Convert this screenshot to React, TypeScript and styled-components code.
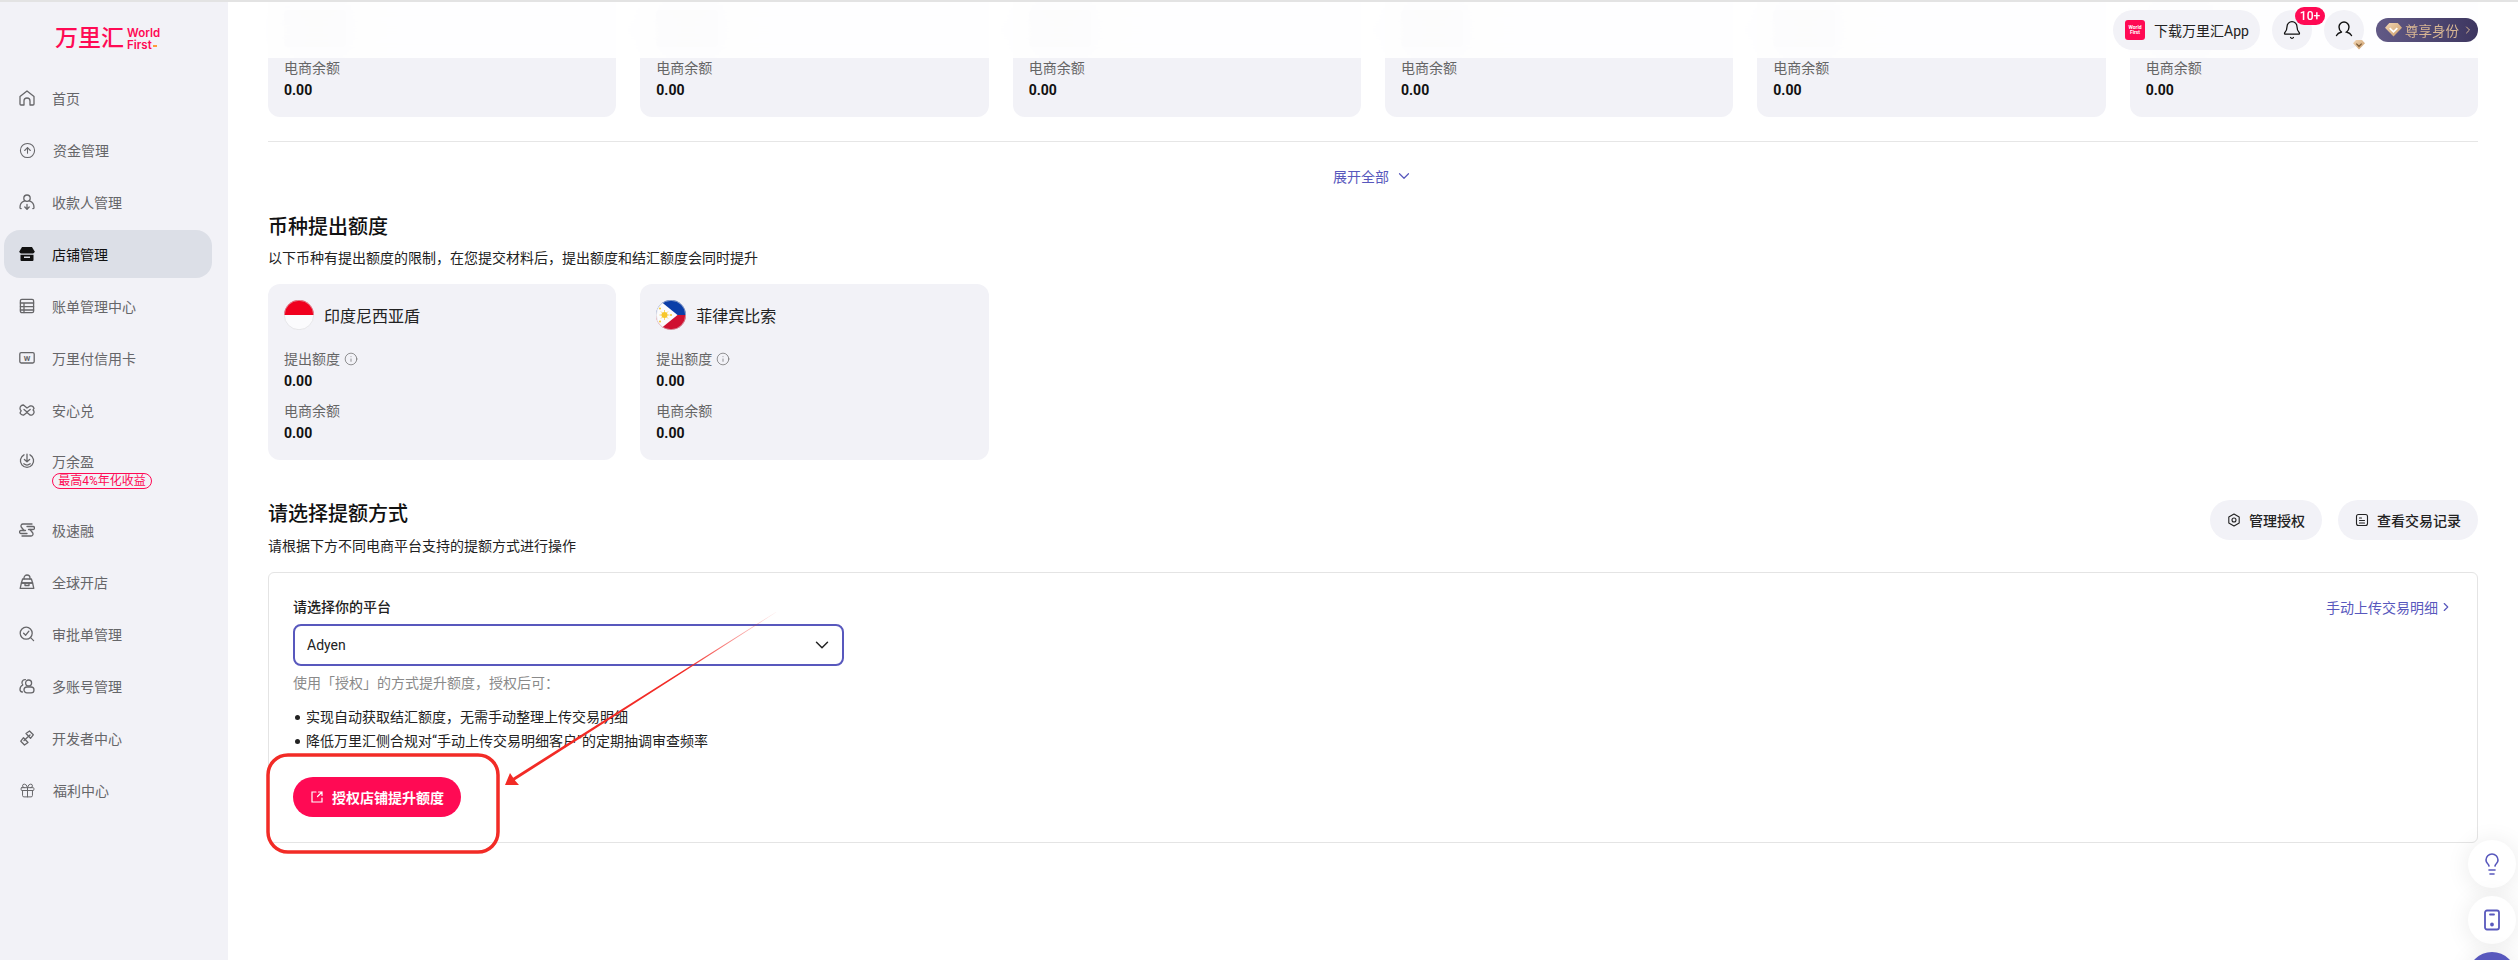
import React from "react";
import styled, { createGlobalStyle } from "styled-components";
import { Bell, ChevronDown, ChevronRight, CircleArrowUp, Gift, Info, Lightbulb } from "lucide-react";

const FONT = `Roboto, "Noto Sans CJK SC", "Noto Sans", sans-serif`;
const RED = "#ff0a54";
const PURPLE = "#5858bd";

const Global = createGlobalStyle`
  html, body { margin: 0; padding: 0; width: 2518px; height: 960px; overflow: hidden; background: #fff; }
  body { font-family: ${FONT}; color: #1a1a1a; }
  * { box-sizing: border-box; }
`;

const Page = styled.div`
  position: relative;
  width: 2518px;
  height: 960px;
  overflow: hidden;
  display: flex;
  flex-direction: column;
`;
const TopStrip = styled.div`
  height: 2px;
  flex: none;
  background: #e3e3e3;
`;
const Body = styled.div`
  flex: 1;
  display: flex;
  min-height: 0;
`;

/* ---------- sidebar ---------- */
const Sidebar = styled.aside`
  width: 228px;
  flex: none;
  background: #f2f2f7;
  display: flex;
  flex-direction: column;
  align-items: flex-start;
`;
const Logo = styled.div`
  height: 44px;
  margin: 15px 0 0 55px;
  display: flex;
  align-items: center;
  gap: 3px;
  color: ${RED};
`;
const LogoCn = styled.span`
  font-size: 23px;
  line-height: 24px;
  font-weight: 500;
  white-space: nowrap;
`;
const LogoEn = styled.span`
  position: relative;
  display: flex;
  flex-direction: column;
  align-items: center;
  font-family: Inter, sans-serif;
  font-size: 11.5px;
  line-height: 12px;
  font-weight: 600;
`;
const LogoSpark = styled.i`
  position: absolute;
  right: 3px;
  bottom: 4px;
  width: 4px;
  height: 2px;
  background: #ff9a3c;
`;
const Menu = styled.nav`
  margin-top: 11px;
  width: 100%;
  display: flex;
  flex-direction: column;
`;
const MenuItem = styled.div<{ $active?: boolean; $tall?: boolean }>`
  width: 208px;
  height: ${(p) => (p.$tall ? "64px" : "48px")};
  margin: 2px 0 2px 4px;
  padding-left: 15px;
  border-radius: 16px;
  display: flex;
  align-items: ${(p) => (p.$tall ? "flex-start" : "center")};
  gap: 17px;
  font-size: 14px;
  color: ${(p) => (p.$active ? "#111" : "#666669")};
  background: ${(p) => (p.$active ? "#dcdfe7" : "transparent")};
  svg { flex: none; }
`;
const TallText = styled.div`
  display: flex;
  flex-direction: column;
  align-items: flex-start;
  padding-top: 13px;
  line-height: 22px;
`;
const TallIcon = styled.div`
  padding-top: 15px;
  display: flex;
`;
const PromoTag = styled.span`
  height: 16px;
  width: 100px;
  border: 1px solid ${RED};
  border-radius: 8px;
  color: ${RED};
  font-size: 12px;
  line-height: 14px;
  text-align: center;
  white-space: nowrap;
`;

/* ---------- main ---------- */
const Main = styled.main`
  position: relative;
  flex: 1;
  min-width: 0;
  overflow: hidden;
`;
const Header = styled.header`
  position: absolute;
  z-index: 2;
  top: 0;
  left: 0;
  right: 0;
  height: 56px;
  padding: 8px 40px 0 0;
  display: flex;
  justify-content: flex-end;
  align-items: flex-start;
  background: rgba(255, 255, 255, 0.9);
  backdrop-filter: blur(26px);
`;
const AppPill = styled.div`
  width: 147px;
  height: 40px;
  border-radius: 20px;
  background: #f2f2f7;
  display: flex;
  align-items: center;
  gap: 9px;
  padding-left: 12px;
  font-size: 14px;
  color: #222;
  white-space: nowrap;
`;
const AppIcon = styled.span`
  width: 20px;
  height: 20px;
  border-radius: 3px;
  background: ${RED};
  color: #fff;
  display: flex;
  flex-direction: column;
  align-items: center;
  justify-content: center;
  font-size: 5px;
  line-height: 5px;
  font-weight: 700;
`;
const RoundBtn = styled.div`
  position: relative;
  width: 40px;
  height: 40px;
  margin-left: 12px;
  border-radius: 50%;
  background: #f2f2f7;
  display: flex;
  align-items: center;
  justify-content: center;
  color: #111;
`;
const CountBadge = styled.span`
  position: absolute;
  top: -3px;
  left: 23px;
  width: 30px;
  height: 18px;
  border-radius: 9px;
  background: ${RED};
  color: #fff;
  font-size: 12px;
  line-height: 18px;
  text-align: center;
  font-weight: 500;
`;
const GemBadge = styled.span`
  position: absolute;
  right: -1px;
  bottom: 0;
  display: flex;
`;
const VipPill = styled.div`
  width: 102px;
  height: 24px;
  margin: 8px 0 0 12px;
  border-radius: 12px;
  background: linear-gradient(90deg, #625a86, #3d3660);
  display: flex;
  align-items: center;
  padding-left: 9px;
  gap: 3px;
  font-size: 13.5px;
  white-space: nowrap;
  color: #d8b693;
  svg { flex: none; }
`;

const Content = styled.div`
  margin-top: -61px;
  padding: 0 40px;
`;
const CardGrid = styled.div`
  display: grid;
  grid-template-columns: repeat(6, 1fr);
  gap: 24px;
`;
const Card = styled.div`
  height: 176px;
  padding: 16px;
  border-radius: 12px;
  background: #f2f2f7;
`;
const CardHead = styled.div`
  height: 30px;
  display: flex;
  align-items: center;
  gap: 10px;
  font-size: 16px;
  color: #222;
`;
const Fields = styled.div`
  margin-top: 18px;
  display: flex;
  flex-direction: column;
  gap: 8px;
`;
const Field = styled.div`
  display: flex;
  flex-direction: column;
`;
const FieldLabel = styled.div`
  height: 22px;
  display: flex;
  align-items: center;
  gap: 4px;
  font-size: 14px;
  line-height: 22px;
  color: #666;
`;
const FieldValue = styled.div`
  height: 22px;
  font-size: 14px;
  line-height: 22px;
  font-weight: 700;
  color: #111;
`;
/* what the frosted header smudges: the part of a card that has scrolled under it */
const ScrolledPart = styled.div`
  height: 37px;
  margin: 53px 0 10px;
  width: 62px;
  border-radius: 4px;
  background: #d2d2d8;
`;
const Divider = styled.div`
  margin-top: 24px;
  height: 1px;
  background: #e6e6e6;
`;
const Expand = styled.div`
  height: 68px;
  display: flex;
  align-items: center;
  justify-content: center;
  gap: 6px;
  font-size: 14px;
  color: ${PURPLE};
`;
const Title = styled.h2`
  margin: 0;
  font-size: 20px;
  line-height: 28px;
  font-weight: 500;
  color: #111;
`;
const Sub = styled.p`
  margin: 6px 0 0;
  font-size: 14px;
  line-height: 22px;
  color: #222;
`;
const SectionOne = styled.section`
  margin-top: 3px;
  ${CardGrid} { margin-top: 15px; }
`;
const SectionTwo = styled.section`
  margin-top: 40px;
  ${Sub} { margin-top: 7px; }
`;
const SectionHead = styled.div`
  display: flex;
  justify-content: space-between;
  align-items: flex-start;
`;
const Actions = styled.div`
  display: flex;
  gap: 16px;
`;
const ActionBtn = styled.div<{ $w: number }>`
  width: ${(p) => p.$w}px;
  height: 40px;
  border-radius: 20px;
  background: #f2f2f7;
  display: flex;
  align-items: center;
  justify-content: center;
  gap: 8px;
  font-size: 14px;
  font-weight: 500;
  color: #222;
`;
const Panel = styled.div`
  margin-top: 15px;
  height: 271px;
  border: 1px solid #e4e4e4;
  border-radius: 6px;
  padding: 23px 24px 0;
`;
const PanelTop = styled.div`
  display: flex;
  justify-content: space-between;
  height: 22px;
  align-items: center;
`;
const FormLabel = styled.div`
  font-size: 14px;
  font-weight: 500;
  color: #222;
  line-height: 22px;
`;
const UploadLink = styled.div`
  display: flex;
  align-items: center;
  gap: 1px;
  font-size: 14px;
  color: ${PURPLE};
`;
const Select = styled.div`
  margin-top: 6px;
  width: 551px;
  height: 42px;
  border: 2px solid ${PURPLE};
  border-radius: 8px;
  padding: 0 9px 0 12px;
  display: flex;
  align-items: center;
  justify-content: space-between;
  font-size: 14px;
  color: #222;
`;
const Hint = styled.div`
  margin-top: 6px;
  font-size: 14px;
  line-height: 22px;
  color: #8a8a8a;
`;
const Bullets = styled.ul`
  margin: 12px 0 0;
  padding: 0;
  list-style: none;
`;
const Bullet = styled.li`
  position: relative;
  padding-left: 13px;
  font-size: 14px;
  line-height: 22px;
  margin-bottom: 2px;
  color: #222;
  &::before {
    content: "";
    position: absolute;
    left: 2px;
    top: 9px;
    width: 5px;
    height: 5px;
    border-radius: 50%;
    background: #222;
  }
`;
const Primary = styled.div`
  margin-top: 25px;
  width: 168px;
  height: 40px;
  border-radius: 20px;
  background: ${RED};
  color: #fff;
  display: flex;
  align-items: center;
  justify-content: center;
  gap: 8px;
  font-size: 14px;
  font-weight: 700;
`;

/* ---------- overlays ---------- */
const FloatBtn = styled.div<{ $top: number; $fill?: boolean }>`
  position: absolute;
  z-index: 3;
  right: 2px;
  top: ${(p) => p.$top}px;
  width: 48px;
  height: 48px;
  border-radius: 50%;
  background: ${(p) => (p.$fill ? PURPLE : "#fff")};
  color: ${PURPLE};
  box-shadow: 0 2px 24px rgba(0, 0, 0, 0.09);
  display: flex;
  align-items: center;
  justify-content: center;
`;
const Annotation = styled.svg`
  position: absolute;
  z-index: 4;
  left: 0;
  top: 0;
  pointer-events: none;
`;

/* ---------- icons ---------- */
const Ico = ({ children }: { children: React.ReactNode }) => (
  <svg width="16" height="16" viewBox="0 0 16 16" fill="none" stroke="currentColor" strokeWidth="1.300" strokeLinecap="round" strokeLinejoin="round">
    {children}
  </svg>
);
const icons: Record<string, React.ReactNode> = {
  home: <Ico><path d="M1 6.600 8 1l7 5.600V14a1 1 0 0 1-1 1h-3v-4a3 3 0 0 0-6 0v4H2a1 1 0 0 1-1-1z" /></Ico>,
  fund: <CircleArrowUp size={17} strokeWidth={1.5} />,
  payee: <Ico><circle cx="8" cy="4.200" r="3.200" /><path d="M5.200 7.200C2.800 8 1 10.200 1 13.400c0 .8.5 1.200 1.200 1.200M10.800 7.200C13.200 8 15 10.200 15 13.400c0 .8-.5 1.200-1.200 1.200" /><path d="M8 10.400v5M5.800 13 8 15.200l2.200-2.200" /></Ico>,
  store: (
    <svg width="16" height="16" viewBox="0 0 16 16" fill="currentColor">
      <path d="M3 1h10l2.500 4.200a2 2 0 0 1-1.500 2.300H2a2 2 0 0 1-1.500-2.300z" />
      <path d="M1.500 8.800h13V14a1 1 0 0 1-1 1h-11a1 1 0 0 1-1-1zM5 10.600v1.300h6v-1.300z" fillRule="evenodd" />
    </svg>
  ),
  bill: <Ico><rect x="1.400" y="1.400" width="13.200" height="13.200" rx="1.400" /><path d="M1.400 5h13.200M1.400 8.600h13.200M1.400 12h13.200M5 5v9.600" /></Ico>,
  card: (
    <Ico>
      <rect x="0.800" y="2.600" width="14.400" height="10.400" rx="1.400" />
      <text x="8" y="10.600" textAnchor="middle" fontSize="7.500" fontWeight="700" fill="currentColor" stroke="none" fontFamily="Roboto, sans-serif">W</text>
    </Ico>
  ),
  exchange: <Ico><path d="M4.500 3C2.500 3 1 4.600 1 6.500c0 1 .5 1.800 1.200 2.300L1 11c.8 1.500 2.200 2.300 3.800 2L8 10.500l3 2.500c1.800.5 3.500-.5 4-2.400.2-1-.2-2-1-2.600l1-1.500c-.5-1.800-2.200-3-4-2.500L8 6 4.500 3z" /><path d="M5 7.500l3 2.500 3.200-2.500" /></Ico>,
  yield: <Ico><path d="M5 1.800a6.600 6.600 0 1 0 6 0" /><path d="M8 1.200v7.200M5.400 6.400 8 8.800l2.600-2.400M4.800 10.800c1.800 1.400 4.600 1.400 6.400 0" /></Ico>,
  fast: <Ico><path d="M13 2H4a2 2 0 0 0-1.800 3L5 8.500M3 14h9a2 2 0 0 0 1.800-3L11 7.500" /><path d="M8 4.500h6a1.500 1.500 0 0 1 0 3H9.500M8 11.500H2a1.500 1.500 0 0 1 0-3h4.500" /></Ico>,
  shop: <Ico><path d="M5 5V4a3 3 0 0 1 6 0v1" /><path d="M3.600 5h8.800l1.200 4H2.400z" /><path d="M1.200 14.400 2.400 9h11.200l1.200 5.400zM6 9v2.500h4V9" /></Ico>,
  audit: <Ico><circle cx="7.200" cy="7.200" r="6" /><path d="M4.600 7.200 6.700 9.200l3.200-4M11.600 11.600l3 3" /></Ico>,
  multi: <Ico><circle cx="9.600" cy="5" r="3" /><path d="M6.400 1.600a3.200 3.200 0 0 0-2.600 5.400C1.800 7.800 1 9.600 1 11.400c0 1.500 1 2.400 2.400 2.600" /><rect x="5" y="9" width="10" height="5.800" rx="2.900" /></Ico>,
  dev: <Ico><path d="M7 3.500 10.500 1l3.800 3.800-2.800 3.500zM9 12.500 5.500 15 1.800 11.200l2.700-3.500z" /><path d="M5 10.500 11 5" /></Ico>,
  gift: <Gift size={17} strokeWidth={1.4} />,
};

const MENU: [string, string][] = [
  ["home", "首页"], ["fund", "资金管理"], ["payee", "收款人管理"], ["store", "店铺管理"],
  ["bill", "账单管理中心"], ["card", "万里付信用卡"], ["exchange", "安心兑"], ["yield", "万余盈"],
  ["fast", "极速融"], ["shop", "全球开店"], ["audit", "审批单管理"], ["multi", "多账号管理"],
  ["dev", "开发者中心"], ["gift", "福利中心"],
];

const IdFlag = () => (
  <svg width="30" height="30" viewBox="0 0 30 30">
    <clipPath id="idc"><circle cx="15" cy="15" r="15" /></clipPath>
    <g clipPath="url(#idc)"><rect width="30" height="15" fill="#f0001e" /><rect y="15" width="30" height="15" fill="#fbfbfd" /></g>
    <circle cx="15" cy="15" r="14.700" fill="none" stroke="#d6d6da" strokeWidth=".6" />
  </svg>
);
const PhFlag = () => (
  <svg width="30" height="30" viewBox="0 0 30 30">
    <clipPath id="phc"><circle cx="15" cy="15" r="15" /></clipPath>
    <g clipPath="url(#phc)">
      <rect width="30" height="15" fill="#0b3ea8" />
      <rect y="15" width="30" height="15" fill="#cf1130" />
      <path d="M0 0 L3 0 L21.500 15 L3 30 L0 30 Z" fill="#fbfbfd" />
      <circle cx="8.500" cy="15" r="3" fill="#f7c72c" />
      <path d="M8.500 10v10M3.500 15h10M5 11.500l7 7M12 11.500l-7 7" stroke="#f7c72c" strokeWidth=".7" />
      <circle cx="4" cy="8.500" r="1" fill="#f7c72c" /><circle cx="4" cy="21.500" r="1" fill="#f7c72c" /><circle cx="15" cy="15" r="1" fill="#f7c72c" />
    </g>
    <circle cx="15" cy="15" r="14.700" fill="none" stroke="#d6d6da" strokeWidth=".6" />
  </svg>
);

const Gem = ({ size }: { size: number }) => (
  <svg width={size} height={size * 0.8} viewBox="0 0 20 16">
    <defs>
      <linearGradient id={`gem${size}`} x1="0" x2="1" y1="0" y2="1"><stop offset="0" stopColor="#f3d7b4" /><stop offset="1" stopColor="#c99a68" /></linearGradient>
    </defs>
    <path d="M5 0h10l5 5.500L10 16 0 5.500z" fill={`url(#gem${size})`} />
    <path d="M5.500 6l4.500 4.500L14.500 6" stroke={size > 12 ? "#fff" : "#7a5a36"} strokeWidth="2" fill="none" />
  </svg>
);

const Money = ({ label, info }: { label: string; info?: boolean }) => (
  <Field>
    <FieldLabel>{label}{info && <Info size={14} strokeWidth={1.2} />}</FieldLabel>
    <FieldValue>0.00</FieldValue>
  </Field>
);

const CurrencyCard = ({ flag, name }: { flag: React.ReactNode; name: string }) => (
  <Card>
    <CardHead>{flag}{name}</CardHead>
    <Fields>
      <Money label="提出额度" info />
      <Money label="电商余额" />
    </Fields>
  </Card>
);

export default function App() {
  return (
    <Page>
      <Global />
      <TopStrip />
      <Body>
        <Sidebar>
          <Logo>
            <LogoCn>万里汇</LogoCn>
            <LogoEn>World<br />First<LogoSpark /></LogoEn>
          </Logo>
          <Menu>
            {MENU.map(([k, label]) =>
              k === "yield" ? (
                <MenuItem key={k} $tall>
                  <TallIcon>{icons[k]}</TallIcon>
                  <TallText>{label}<PromoTag>最高4%年化收益</PromoTag></TallText>
                </MenuItem>
              ) : (
                <MenuItem key={k} $active={k === "store"}>{icons[k]}{label}</MenuItem>
              )
            )}
          </Menu>
        </Sidebar>
        <Main>
          <Header>
            <AppPill><AppIcon><span>World</span><span>First</span></AppIcon>下载万里汇App</AppPill>
            <RoundBtn><Bell size={20} strokeWidth={1.5} /><CountBadge>10+</CountBadge></RoundBtn>
            <RoundBtn>
              <svg width="20" height="20" viewBox="0 0 20 20" fill="none" stroke="currentColor" strokeWidth="1.400" strokeLinecap="round">
                <path d="M7.500 12C5.800 10.800 5 9.200 5 7a5 5 0 0 1 10 0c0 2.200-.8 3.800-2.500 5 2 .5 4 1.500 5 3.500M7.500 12c-2 .5-4 1.500-5 3.500" />
              </svg>
              <GemBadge><Gem size={12} /></GemBadge>
            </RoundBtn>
            <VipPill><Gem size={17} />尊享身份<ChevronRight size={12} /></VipPill>
          </Header>
          <Content>
            <CardGrid>
              {[0, 1, 2, 3, 4, 5].map((i) => (
                <Card key={i}>
                  <ScrolledPart />
                  <Money label="电商余额" />
                </Card>
              ))}
            </CardGrid>
            <Divider />
            <Expand>展开全部<ChevronDown size={18} strokeWidth={1.6} /></Expand>
            <SectionOne>
              <Title>币种提出额度</Title>
              <Sub>以下币种有提出额度的限制，在您提交材料后，提出额度和结汇额度会同时提升</Sub>
              <CardGrid>
                <CurrencyCard flag={<IdFlag />} name="印度尼西亚盾" />
                <CurrencyCard flag={<PhFlag />} name="菲律宾比索" />
              </CardGrid>
            </SectionOne>
            <SectionTwo>
              <SectionHead>
                <div>
                  <Title>请选择提额方式</Title>
                  <Sub>请根据下方不同电商平台支持的提额方式进行操作</Sub>
                </div>
                <Actions>
                  <ActionBtn $w={112}>
                    <svg width="14" height="14" viewBox="0 0 14 14" fill="none" stroke="currentColor" strokeWidth="1.100"><path d="M7 1l5.200 3v6L7 13l-5.200-3V4z" strokeLinejoin="round" /><circle cx="7" cy="7" r="2" /></svg>
                    管理授权
                  </ActionBtn>
                  <ActionBtn $w={140}>
                    <svg width="14" height="14" viewBox="0 0 14 14" fill="none" stroke="currentColor" strokeWidth="1.100" strokeLinecap="round"><rect x="1.500" y="1.500" width="11" height="11" rx="2" /><path d="M4.500 5h2M4.500 7.500h5M4.500 10h5" /></svg>
                    查看交易记录
                  </ActionBtn>
                </Actions>
              </SectionHead>
              <Panel>
                <PanelTop>
                  <FormLabel>请选择你的平台</FormLabel>
                  <UploadLink>手动上传交易明细<ChevronRight size={14} /></UploadLink>
                </PanelTop>
                <Select>Adyen<ChevronDown size={22} strokeWidth={1.6} /></Select>
                <Hint>使用「授权」的方式提升额度，授权后可：</Hint>
                <Bullets>
                  <Bullet>实现自动获取结汇额度，无需手动整理上传交易明细</Bullet>
                  <Bullet>降低万里汇侧合规对“手动上传交易明细客户”的定期抽调审查频率</Bullet>
                </Bullets>
                <Primary>
                  <svg width="14" height="14" viewBox="0 0 14 14" fill="none" stroke="currentColor" strokeWidth="1.200" strokeLinecap="round"><path d="M6 2H2v10h10V8M8.500 2H12v3.500M12 2 7.500 6.500" /></svg>
                  授权店铺提升额度
                </Primary>
              </Panel>
            </SectionTwo>
          </Content>
        </Main>
      </Body>
      <FloatBtn $top={840}><Lightbulb size={24} strokeWidth={1.6} /></FloatBtn>
      <FloatBtn $top={896}>
        <svg width="24" height="24" viewBox="0 0 24 24" fill="none" stroke="currentColor" strokeWidth="1.800" strokeLinecap="round"><rect x="5" y="2.500" width="14" height="19" rx="2" /><path d="M10 6.500h4" /><circle cx="12" cy="16.500" r="1" fill="currentColor" /></svg>
      </FloatBtn>
      <FloatBtn $top={952} $fill />
      <Annotation width="2518" height="960" viewBox="0 0 2518 960">
        <defs>
          <linearGradient id="shaft" gradientUnits="userSpaceOnUse" x1="514" y1="779" x2="776" y2="612">
            <stop offset="0" stopColor="#f22b26" />
            <stop offset=".65" stopColor="#f22b26" />
            <stop offset="1" stopColor="#f22b26" stopOpacity=".1" />
          </linearGradient>
        </defs>
        <rect x="268" y="755" width="230" height="97" rx="20" fill="none" stroke="#f22b26" strokeWidth="3.500" />
        <polygon points="505,785 510,773 513.200,777.700 776,612 776.200,612.300 514.800,780.300 519,785" fill="url(#shaft)" />
      </Annotation>
    </Page>
  );
}
